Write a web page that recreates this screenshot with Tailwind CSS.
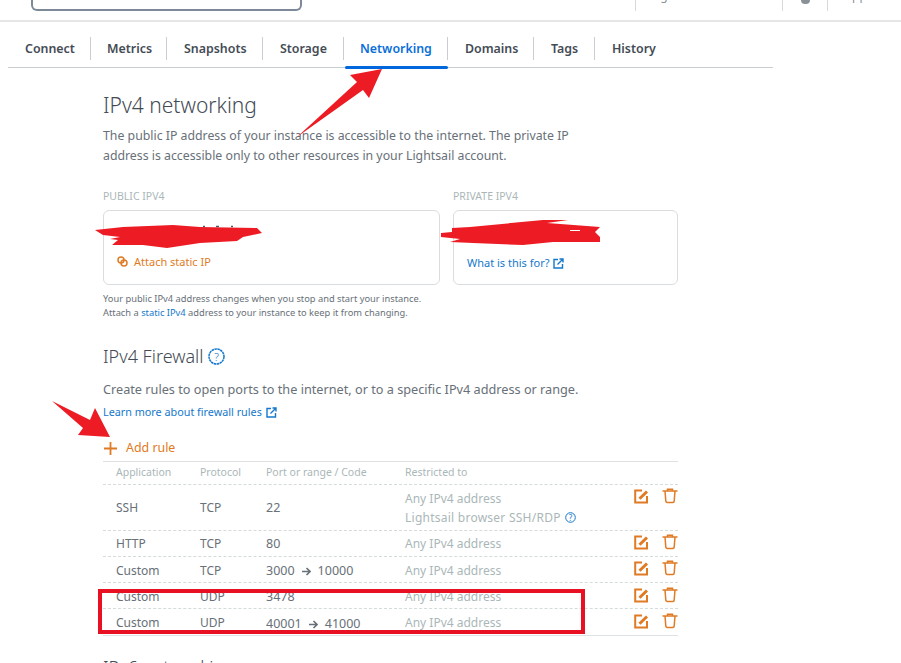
<!DOCTYPE html>
<html lang="en">
<head>
  <meta charset="UTF-8" />
  <title>IPv4 networking</title>
  <script src="https://cdn.jsdelivr.net/npm/@tailwindcss/browser@4"></script>
</head>
<body class="bg-white font-['Noto_Sans',sans-serif] text-[#545b64]">
<div class="relative h-[663px] w-[901px] overflow-hidden">

  <!-- top bar, scrolled almost out of view -->
  <header class="h-[22px] border-b-2 border-[#e4e6e8] flex items-start overflow-hidden">
    <div class="ml-[31px] w-[271px] h-[11px] border-2 border-t-0 border-[#7d8998] rounded-b-[6px]"></div>
    <div class="ml-[333px] h-[11px] border-l border-[#d5dbdb] w-[147px] pl-[10px] text-[12px] leading-[16px] text-[#8a9299]"><div class="-translate-y-[12px]">Region</div></div>
    <div class="h-[11px] border-l border-[#d5dbdb] w-[45px] flex justify-center">
      <div class="w-[9px] h-[4px] rounded-b-full bg-[#8a9299]"></div>
    </div>
    <div class="h-[11px] border-l border-[#d5dbdb] pl-[10px] text-[12px] leading-[16px] text-[#8a9299]"><div class="-translate-y-[12px]">Support</div></div>
  </header>

  <!-- tabs -->
  <nav class="ml-2 mt-[15px] w-[765px] h-[31px] border-b border-[#c9ced3] flex items-start text-[12.4px] font-semibold text-[#444b55] leading-[24px]">
    <a class="h-[23px] w-[83px] pl-[17px] border-r border-[#c9ced3]">Connect</a>
    <a class="h-[23px] w-[76px] pl-[16px] border-r border-[#c9ced3]">Metrics</a>
    <a class="h-[23px] w-[96px] pl-[17px] border-r border-[#c9ced3]">Snapshots</a>
    <a class="h-[23px] w-[81px] pl-[17px] border-r border-[#c9ced3]">Storage</a>
    <div class="relative h-[31px] w-[104px]">
      <a class="block h-[23px] pl-[16px] border-r border-[#c9ced3] text-[#0a6fd8]">Networking</a>
      <div class="absolute left-[1px] right-0 bottom-[-1px] h-[3px] rounded-sm bg-[#0068dc]"></div>
    </div>
    <a class="h-[23px] w-[86px] pl-[17px] border-r border-[#c9ced3]">Domains</a>
    <a class="h-[23px] w-[61px] pl-[17px] border-r border-[#c9ced3]">Tags</a>
    <a class="h-[23px] pl-[17px]">History</a>
  </nav>

  <main class="ml-[103px] w-[575px]">
    <h1 class="mt-[22px] text-[21px] font-light leading-[30px] text-[#444b55]">IPv4 networking</h1>
    <p class="mt-[6px] w-[480px] text-[12.3px] leading-[20px] text-[#687078]">The public IP address of your instance is accessible to the internet. The private IP address is accessible only to other resources in your Lightsail account.</p>

    <div class="mt-[24px] grid grid-cols-[337px_225px] gap-x-[13px]">
      <div>
        <div class="h-[20px] text-[10.5px] leading-[12px] text-[#aab7b8]">PUBLIC IPV4</div>
        <div class="h-[75px] border border-[#d9dde0] rounded-[6px] pt-[43px] pl-[13px] flex items-start gap-[6px] text-[11px] leading-[16px] text-[#e07b24]">
          <svg class="mt-[2px]" width="11" height="11" viewBox="0 0 11 11" fill="none" stroke="#e07b24" stroke-width="1.5"><circle cx="4" cy="4" r="3"/><circle cx="7" cy="7" r="3"/></svg>
          <span>Attach static IP</span>
        </div>
      </div>
      <div>
        <div class="h-[20px] text-[10.5px] leading-[12px] text-[#aab7b8]">PRIVATE IPV4</div>
        <div class="h-[75px] border border-[#d9dde0] rounded-[6px] pt-[44px] pl-[13px] flex items-start gap-[3px] text-[11px] leading-[16px] text-[#1478cc]">
          <span>What is this for?</span>
          <svg class="mt-[3px]" width="11" height="11" viewBox="0 0 11 11" fill="none" stroke="#1478cc" stroke-width="1.4"><path d="M5 1.500H1v8.500h8.500V6"/><path d="M6.500 1h3.500v3.500M10 1 4.500 6.500"/></svg>
        </div>
      </div>
    </div>

    <p class="mt-[7px] text-[9.3px] leading-[14px] text-[#687078]">Your public IPv4 address changes when you stop and start your instance.<br>Attach a <span class="text-[#1478cc]">static IPv4</span> address to your instance to keep it from changing.</p>

    <h2 class="mt-[23px] flex items-center gap-[4px] text-[18px] font-light leading-[26px] text-[#444b55]">IPv4 Firewall
      <svg width="17" height="17" viewBox="0 0 17 17" fill="none"><circle cx="8.500" cy="8.500" r="7.500" stroke="#1478cc" stroke-width="1.500" stroke-dasharray="2.500 .5"/><text x="8.500" y="12.500" text-anchor="middle" font-size="11" fill="#1478cc">?</text></svg>
    </h2>

    <p class="mt-[10px] text-[12.7px] leading-[20px] text-[#687078]">Create rules to open ports to the internet, or to a specific IPv4 address or range.</p>
    <div class="mt-[3px] flex items-center gap-[4px] text-[10.8px] leading-[20px] text-[#1478cc]">
      <span>Learn more about firewall rules</span>
      <svg width="11" height="11" viewBox="0 0 11 11" fill="none" stroke="#1478cc" stroke-width="1.400"><path d="M5 1.500H1v8.500h8.500V6"/><path d="M6.500 1h3.500v3.500M10 1 4.500 6.500"/></svg>
    </div>

    <div class="mt-[15px] h-[22px] flex items-center gap-[8px] text-[12.4px] text-[#e07b24]">
      <svg width="15" height="15" viewBox="0 0 15 15" stroke="#e07b24" stroke-width="1.800"><path d="M7.500 1v13M1 7.500h13"/></svg>
      <span>Add rule</span>
    </div>

    <!-- firewall table -->
    <div class="mt-[2px] border-y border-[#dfe2e4] text-[12px] text-[#687078]">
      <div class="grid grid-cols-[84px_66px_139px_1fr] pl-[13px] h-[23px] items-center border-b border-dashed border-[#d5dbdb] text-[10.5px] text-[#aab7b8]">
        <span>Application</span><span>Protocol</span><span>Port or range / Code</span><span>Restricted to</span>
      </div>

      <div class="grid grid-cols-[84px_66px_139px_229px_28px_16px] pl-[13px] h-[46px] items-center border-b border-dashed border-[#d5dbdb]">
        <span>SSH</span><span>TCP</span><span class="text-[12.5px] translate-y-px">22</span>
        <div class="text-[#aab7b8] leading-[19px]">
          <div>Any IPv4 address</div>
          <div class="flex items-center gap-[4px] tracking-[0.25px]">Lightsail browser SSH/RDP
            <svg width="11" height="11" viewBox="0 0 11 11" fill="none"><circle cx="5.500" cy="5.500" r="4.800" stroke="#1478cc"/><text x="5.500" y="8.500" text-anchor="middle" font-size="8" fill="#1478cc">?</text></svg>
          </div>
        </div>
        <svg class="self-start mt-[4px]" width="15" height="15" viewBox="0 0 15 15" fill="none" stroke="#e07b24" stroke-width="2"><path d="M8 1.500H1.200v12h11.800V7"/><path d="M5.500 9.800 13 2.500" stroke-width="3"/></svg>
        <svg class="self-start mt-[3px]" width="16" height="16" viewBox="0 0 16 16" fill="none" stroke="#e07b24" stroke-width="1.500"><path d="M0.500 3h15M5.500 3V1.200h5V3M3 3l.8 10a1.500 1.500 0 0 0 1.500 1.500h5.400a1.500 1.500 0 0 0 1.500-1.500L13 3"/></svg>
      </div>

      <div class="grid grid-cols-[84px_66px_139px_229px_28px_16px] pl-[13px] h-[26px] items-center border-b border-dashed border-[#d5dbdb]">
        <span>HTTP</span><span>TCP</span><span class="text-[12.5px] translate-y-px">80</span><span class="text-[#aab7b8]">Any IPv4 address</span>
        <svg class="self-start mt-[4px]" width="15" height="15" viewBox="0 0 15 15" fill="none" stroke="#e07b24" stroke-width="2"><path d="M8 1.500H1.200v12h11.800V7"/><path d="M5.500 9.800 13 2.500" stroke-width="3"/></svg>
        <svg class="self-start mt-[3px]" width="16" height="16" viewBox="0 0 16 16" fill="none" stroke="#e07b24" stroke-width="1.500"><path d="M0.500 3h15M5.500 3V1.200h5V3M3 3l.8 10a1.500 1.500 0 0 0 1.500 1.500h5.400a1.500 1.500 0 0 0 1.500-1.500L13 3"/></svg>
      </div>

      <div class="grid grid-cols-[84px_66px_139px_229px_28px_16px] pl-[13px] pt-[2px] h-[26px] items-center border-b border-dashed border-[#d5dbdb]">
        <span>Custom</span><span>TCP</span>
        <span class="flex items-center gap-[7px] text-[12.5px] translate-y-px">3000 <svg width="9" height="9" viewBox="0 0 9 9" fill="none" stroke="#687078" stroke-width="1.600"><path d="M0 4.500h8M4.500 1 8 4.500 4.500 8"/></svg> 10000</span>
        <span class="text-[#aab7b8]">Any IPv4 address</span>
        <svg class="self-start mt-[2px]" width="15" height="15" viewBox="0 0 15 15" fill="none" stroke="#e07b24" stroke-width="2"><path d="M8 1.500H1.200v12h11.800V7"/><path d="M5.500 9.800 13 2.500" stroke-width="3"/></svg>
        <svg class="self-start mt-[1px]" width="16" height="16" viewBox="0 0 16 16" fill="none" stroke="#e07b24" stroke-width="1.500"><path d="M0.500 3h15M5.500 3V1.200h5V3M3 3l.8 10a1.500 1.500 0 0 0 1.500 1.500h5.400a1.500 1.500 0 0 0 1.500-1.500L13 3"/></svg>
      </div>

      <div class="grid grid-cols-[84px_66px_139px_229px_28px_16px] pl-[13px] pt-[2px] h-[26px] items-center border-b border-dashed border-[#d5dbdb]">
        <span>Custom</span><span>UDP</span><span class="text-[12.5px] translate-y-px">3478</span><span class="text-[#aab7b8]">Any IPv4 address</span>
        <svg class="self-start mt-[3px]" width="15" height="15" viewBox="0 0 15 15" fill="none" stroke="#e07b24" stroke-width="2"><path d="M8 1.500H1.200v12h11.800V7"/><path d="M5.500 9.800 13 2.500" stroke-width="3"/></svg>
        <svg class="self-start mt-[2px]" width="16" height="16" viewBox="0 0 16 16" fill="none" stroke="#e07b24" stroke-width="1.500"><path d="M0.500 3h15M5.500 3V1.200h5V3M3 3l.8 10a1.500 1.500 0 0 0 1.500 1.500h5.400a1.500 1.500 0 0 0 1.500-1.500L13 3"/></svg>
      </div>

      <div class="grid grid-cols-[84px_66px_139px_229px_28px_16px] pl-[13px] pt-[2px] h-[26px] items-center">
        <span>Custom</span><span>UDP</span>
        <span class="flex items-center gap-[7px] text-[12.5px] translate-y-px">40001 <svg width="9" height="9" viewBox="0 0 9 9" fill="none" stroke="#687078" stroke-width="1.600"><path d="M0 4.500h8M4.500 1 8 4.500 4.500 8"/></svg> 41000</span>
        <span class="text-[#aab7b8]">Any IPv4 address</span>
        <svg class="self-start mt-[3px]" width="15" height="15" viewBox="0 0 15 15" fill="none" stroke="#e07b24" stroke-width="2"><path d="M8 1.500H1.200v12h11.800V7"/><path d="M5.500 9.800 13 2.500" stroke-width="3"/></svg>
        <svg class="self-start mt-[2px]" width="16" height="16" viewBox="0 0 16 16" fill="none" stroke="#e07b24" stroke-width="1.500"><path d="M0.500 3h15M5.500 3V1.200h5V3M3 3l.8 10a1.500 1.500 0 0 0 1.500 1.500h5.400a1.500 1.500 0 0 0 1.500-1.500L13 3"/></svg>
      </div>
    </div>

    <h2 class="mt-[18px] text-[18px] font-light leading-[26px] text-[#444b55]">IPv6 networking</h2>
  </main>

  <!-- red annotations drawn on top of the screenshot -->
  <svg class="absolute left-0 top-0 pointer-events-none" width="901" height="663" viewBox="0 0 901 663">
    <polygon fill="#ed1c24" points="350,75 382,69 369,98 363,90 297,137 357,82"/>
    <polygon fill="#ed1c24" points="52,401 90,420 95,408 110,437 78,435 83,428"/>
    <polygon fill="#ed1c24" points="95,230 123,227 173,225 200,227 257,228 262,233 243,237 237,241 200,243 167,248 143,245 112,245 118,240 110,239 120,237 103,235"/>
    <path d="M203 226.500h2M216 226.500h3M231 226.500h2" stroke="#545b64" stroke-width="1.500"/>
    <polygon fill="#ed1c24" points="441,233 452,232 452,228 470,227 543,220 568,220 547,223 600,227 595,232 600,237 600,242 553,242 523,245 473,243 450,242 460,239 441,237"/>
    <path d="M570 230.500h10" stroke="#fff" stroke-width="1"/>
    <rect x="100" y="591" width="483" height="41" fill="none" stroke="#e81123" stroke-width="4"/>
  </svg>
</div>
</body>
</html>
